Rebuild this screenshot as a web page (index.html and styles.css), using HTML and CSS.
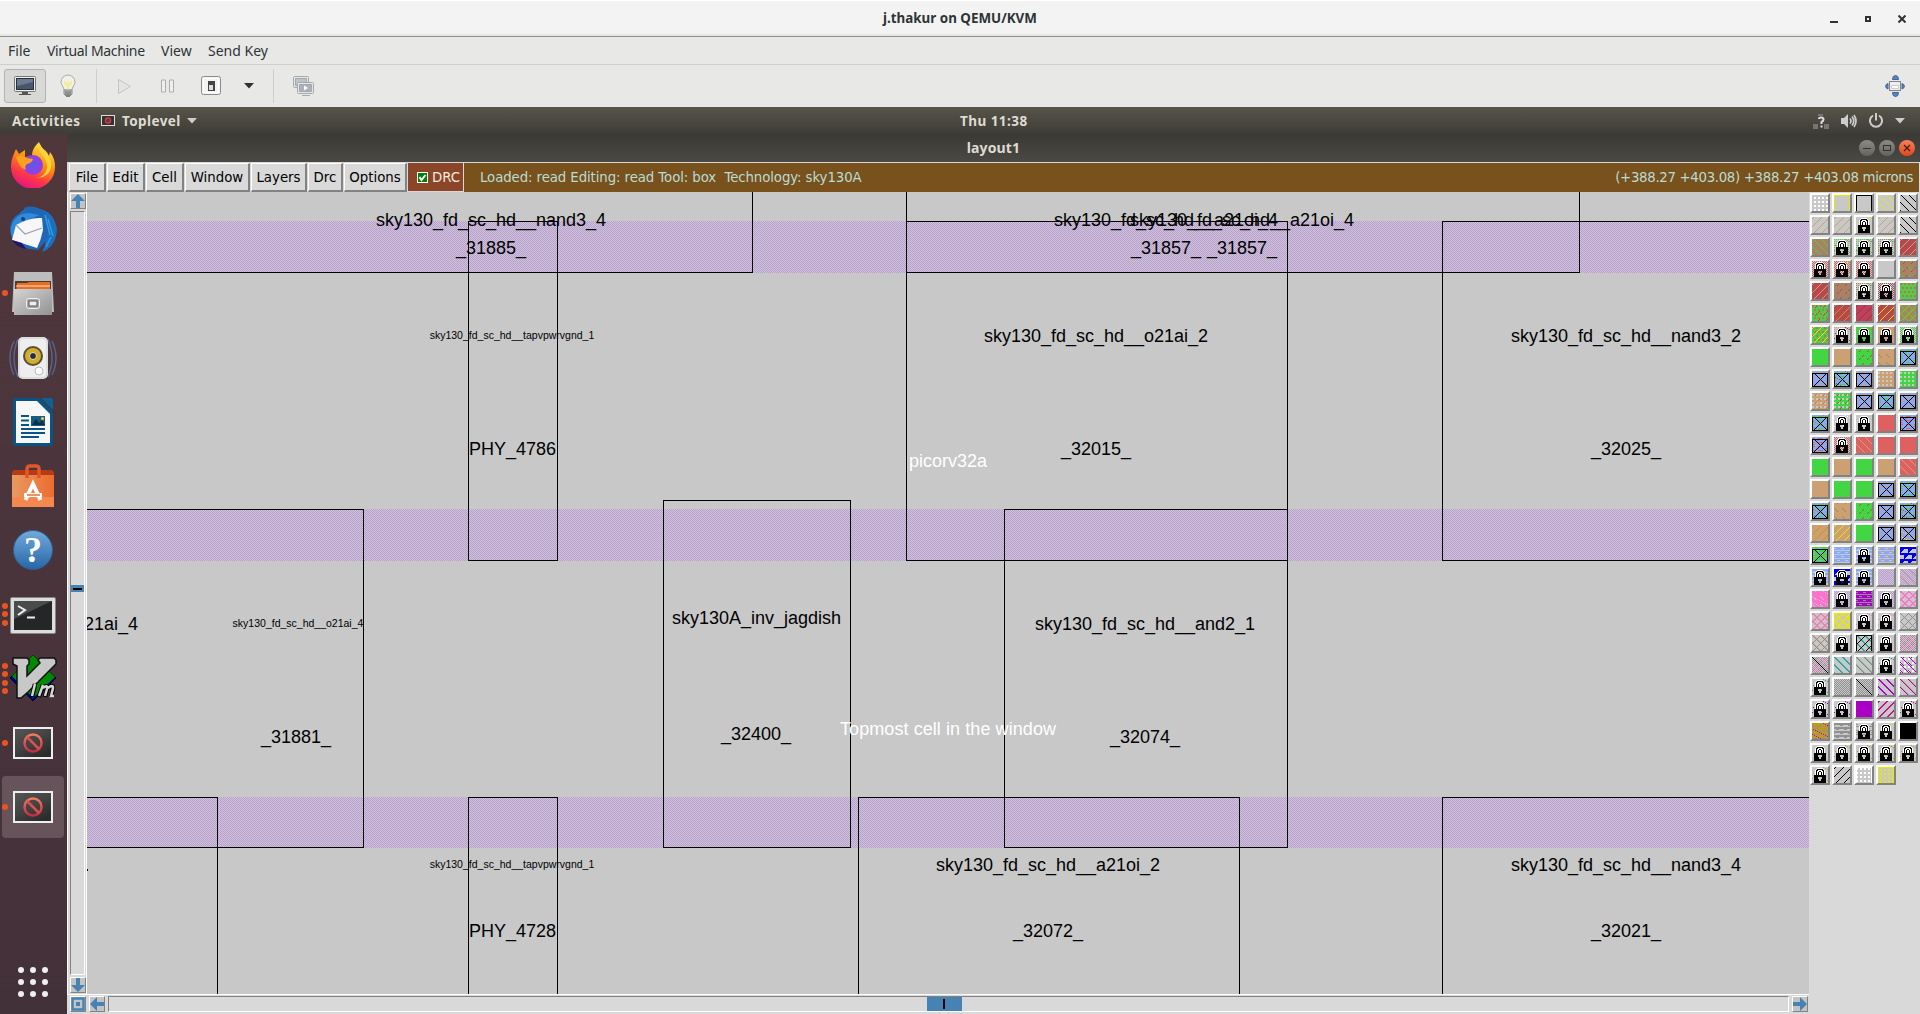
FILE: index.html
```html
<!DOCTYPE html>
<html lang="en">
<head>
<meta charset="utf-8">
<title>j.thakur on QEMU/KVM</title>
<link rel="stylesheet" href="styles.css">
</head>
<body>
<header class="host-title">
  <span class="host-title-text">j.thakur on QEMU/KVM</span>
  <div class="host-controls">
    <svg width="8" height="8"><path d="M0 7h8" stroke="#2e3436" stroke-width="2"/></svg>
    <svg width="6" height="6"><rect x="1" y="1" width="4" height="4" fill="none" stroke="#2e3436" stroke-width="2"/></svg>
    <svg width="8" height="8"><path d="M.5.5l7 7M7.500.5l-7 7" stroke="#2e3436" stroke-width="2"/></svg>
  </div>
</header>
<nav class="host-menu"><span class="m1">File</span><span class="m2">Virtual Machine</span><span class="m3">View</span><span class="m4">Send Key</span></nav>
<div class="host-tools">
  <button class="tool tool-active"><svg width="24" height="22" viewBox="0 0 24 22"><rect x="1.500" y="1.500" width="21" height="15" rx="1" fill="#eee" stroke="#777"/><rect x="3.500" y="3.500" width="17" height="11" fill="#47566b" stroke="#28313e"/><path d="M4 4h16v3L4 11z" fill="#6c7b8f"/><path d="M9 17h6v2h3v1H6v-1h3z" fill="#555"/></svg></button>
  <span class="tool t-bulb"><svg width="18" height="24" viewBox="0 0 18 24"><path d="M9 1a7 7 0 0 1 7 7c0 3-3 5-3 8H5c0-3-3-5-3-8a7 7 0 0 1 7-7z" fill="#f1f1ea" stroke="#aaa"/><path d="M5 6l3 3 1-3 1 3 3-3v4l-3 3v3H8v-3l-3-3z" fill="#f4ed9b"/><path d="M5 16h8v4l-2 2H7l-2-2z" fill="#ccc" stroke="#888"/><path d="M6 18h6M6 20h6M7 22h4" stroke="#555"/></svg></span>
  <i class="tool-sep"></i>
  <span class="tool t-play"><svg width="15" height="17"><path d="M1.500 1.500v14l12-7z" fill="#e4e4e2" stroke="#c4c4c2"/></svg></span>
  <span class="tool t-pause"><svg width="14" height="14"><path d="M.5 1v12h4V1zM8.500 1v12h4V1z" fill="#efefed" stroke="#aeaeac"/></svg></span>
  <span class="tool t-power"><svg width="22" height="22"><rect x="1.500" y="1.500" width="19" height="18" rx="2" fill="#f3f3f3" stroke="#8c8c8c"/><rect x="3.500" y="3.500" width="15" height="14" fill="none" stroke="#fff"/><rect x="8" y="6" width="7" height="10" fill="#444"/><rect x="9" y="10" width="4" height="5" fill="#ddd"/></svg></span>
  <span class="tool t-drop"><svg width="10" height="6"><path d="M0 0h10L5 5.500z" fill="#2e3436"/></svg></span>
  <i class="tool-sep"></i>
  <span class="tool t-snap"><svg width="23" height="22"><g fill="#e4e5e6" stroke="#a6a9ac"><rect x="1.500" y="1.500" width="15" height="11" rx="1"/><path d="M3.500 3.500h11v7h-11z" fill="#bcc2ca"/><rect x="5.500" y="7.500" width="16" height="11" rx="1"/><path d="M7.500 9.500h12v7h-12z" fill="#a9b1bd"/></g><path d="M12 10.500v5l4-2.500z" fill="#fff"/><path d="M10 20.500h8" stroke="#aaa"/></svg></span>
  <span class="t-full"><svg width="22" height="22"><g fill="#5c85bd" stroke="#3d659e"><path d="M8.500 4.500a3 4 0 0 1 6 0zM8.500 17.500a3 4 0 0 0 6 0zM4 8.500a4 3 0 0 0 0 5.500zM18 8.500a4 3 0 0 1 0 5.500z"/></g><rect x="5.500" y="6.500" width="11" height="9" fill="#eee" stroke="#85867f"/><path d="M7.500 10.500h7v3h-7z" fill="#fff" stroke="#ccc"/></svg></span>
</div>
<div class="gnome-bar">
  <span class="activities">Activities</span>
  <svg class="app-ico" width="14" height="11"><rect x=".5" y=".5" width="13" height="10" fill="#333" stroke="#ddd"/><circle cx="7" cy="5.500" r="2.500" fill="none" stroke="#d33c46" stroke-width="1.500"/><path d="M5.500 4l3 3" stroke="#d33c46"/></svg>
  <span class="app-name">Toplevel</span>
  <svg class="app-drop" width="10" height="6"><path d="M0 0h10L5 5.500z" fill="#ccc"/></svg>
  <span class="clock">Thu 11:38</span>
  <div class="tray">
    <svg width="16" height="16"><path d="M5 1h5v2H5zM0 11h5v5H0zM11 11h5v5h-5z" fill="#77756f"/><path d="M6 6q0-1.500 2-1.500 2.500 0 2.500 2Q10.500 8 8.500 9v2M8.500 12.500v2" fill="none" stroke="#ddd" stroke-width="2"/></svg>
    <svg width="16" height="14"><path d="M0 4h3l4-4v14l-4-4H0z" fill="#ccc"/><path d="M9 4.500q2 2.500 0 5M11 2.500q3.500 4.500 0 9M13 1q4 6 0 12" fill="none" stroke="#ccc" stroke-width="1.700"/></svg>
    <svg width="14" height="15"><path d="M4 2.500a6 6 0 1 0 6 0M7 0v7.500" fill="none" stroke="#ccc" stroke-width="2"/></svg>
    <svg width="10" height="6"><path d="M0 0h10L5 5.500z" fill="#ccc"/></svg>
  </div>
</div>
<div class="desktop">
  <aside class="dock">
    <div class="app"><svg width="46" height="46" viewBox="0 0 46 46"><defs><linearGradient id="fx" x1=".8" y1="0" x2=".35" y2="1"><stop offset="0" stop-color="#fff44f"/><stop offset=".4" stop-color="#ff980e"/><stop offset=".75" stop-color="#ff3647"/><stop offset="1" stop-color="#e31587"/></linearGradient><radialGradient id="fg"><stop offset="0" stop-color="#5b5ae8"/><stop offset="1" stop-color="#9a3be0"/></radialGradient></defs><path d="M3 14L6 7l3 5 6-4v7l7-1c0-7 4-11 7-14 2 7 8 8 10 14l1-4c4 5 5 10 5 15a22 22 0 0 1-44 0c0-5 1-8 2-11z" fill="url(#fx)"/><circle cx="23" cy="23" r="10" fill="url(#fg)"/><path d="M6 15q5-3 10 1l7 1q-1 4-6 5-3 2-1 6-7-2-10-13z" fill="#ffa01f"/><path d="M30 2c-5 9 8 11 7 24-1 6-6 10-11 10 13 0 19-11 13-21-2-5-7-6-9-13z" fill="#ffd43b"/></svg></div>
    <div class="app"><svg width="48" height="48" viewBox="0 0 48 48"><path d="M9 10Q19-2 31 4q14 3 17 20-1 18-15 23 6-10 2-20L12 14z" fill="#1d6fbe"/><path d="M1 26Q1 8 18 7l-3-4q8-4 19 3 9 8 3 30l-8 9Q5 44 1 26z" fill="#1f66b4"/><path d="M2 22Q6 8 20 8l10 2-18 9-8 16q-3-6-2-13z" fill="#2f8bd9"/><path d="M7 20q14-8 26-7l1 12q-2 10-6 18L3 35z" fill="#f7f7f9"/><path d="M7 20l9 9 17-6" fill="none" stroke="#9aa0ac" stroke-width="1.200"/><path d="M3 35l10 3 4 6Q7 42 3 35z" fill="#241569"/><path d="M39 14l5 17M36 10l5 20M42 32l-5 10" stroke="#2f9ae0" stroke-width="1.500"/><circle cx="14" cy="14" r="2" fill="#1a3f6e"/></svg></div>
    <div class="app"><i class="dots"><b></b></i><svg class="files" width="42" height="44" viewBox="0 0 42 44"><defs><linearGradient id="cb" x2="1" y2="1"><stop stop-color="#d4d4d4"/><stop offset="1" stop-color="#929292"/></linearGradient></defs><path d="M2 0h38l2 40H0z" fill="#bdbdbd"/><path d="M3 9h36v9H3z" fill="#493c34"/><path d="M5 11h10l2-1h21v10H4z" fill="#e46d28"/><path d="M4 14h34" stroke="#ffe1bd"/><path d="M2 17h38v26H2z" fill="url(#cb)"/><rect x="14.500" y="26.500" width="13" height="10" rx="2" fill="#aaa" stroke="#eee"/><rect x="17" y="29" width="8" height="5" fill="#eee" stroke="#555"/></svg></div>
    <div class="app"><svg width="48" height="44" viewBox="0 0 48 44"><path d="M5 5q-8 17 0 34M9 3q-8 19 0 38M43 5q8 17 0 34M39 3q8 19 0 38" fill="none" stroke="#566387" stroke-width="1.500"/><rect x="9" y="1" width="30" height="42" rx="5" fill="#eee"/><rect x="10" y="2" width="28" height="40" rx="5" fill="none" stroke="#ccc"/><circle cx="24" cy="20" r="10" fill="#554e3a"/><circle cx="24" cy="20" r="8" fill="#d3ad25"/><circle cx="24" cy="20" r="3.500" fill="#2d302e" stroke="#ddd"/><circle cx="30" cy="35" r="4" fill="#fff" stroke="#bbb"/></svg></div>
    <div class="app"><svg width="40" height="48" viewBox="0 0 40 48"><path d="M2 0h24l14 14v32q0 2-2 2H2q-2 0-2-2V2q0-2 2-2z" fill="#075485"/><path d="M28 0h10q2 0 2 2v10z" fill="#0b6199"/><path d="M3 3h21l13 13v29H3z" fill="#f7f7f7"/><path d="M8 18h8M8 22.500h8M8 27h8M8 31h24M8 35h24M8 39h18" stroke="#0a5585" stroke-width="2"/><path d="M18 18h14v10H18z" fill="#155d87"/><path d="M19 27l4-6 3 4 3-3 3 5z" fill="#10333f"/><circle cx="29.500" cy="20.500" r="1.500" fill="#f4cc47"/></svg></div>
    <div class="app"><svg width="42" height="44" viewBox="0 0 42 44"><defs><linearGradient id="sw" x2="1"><stop stop-color="#e99a61"/><stop offset="1" stop-color="#ed6b2e"/></linearGradient></defs><path d="M0 8l2-2h38l2 2v4H0z" fill="#b33c16"/><path d="M0 11h42v31q0 1-1 1H1q-1 0-1-1z" fill="url(#sw)"/><path d="M0 33h42v10H0z" fill="#f5884e"/><path d="M15 14V5q0-3 3-3h6q3 0 3 3v9" fill="none" stroke="#e2562a" stroke-width="3.500"/><path d="M13.500 36L21 20l7.500 16M12 31h18" fill="none" stroke="#fff" stroke-width="4"/><path d="M15 31h13" stroke="#ed6c31" stroke-width="1.500"/></svg></div>
    <div class="app"><svg width="40" height="40" viewBox="0 0 40 40"><defs><linearGradient id="hp" y2="1" x2="0"><stop stop-color="#72a9dc"/><stop offset="1" stop-color="#2767a6"/></linearGradient></defs><circle cx="20" cy="20" r="19.500" fill="url(#hp)" stroke="#2a6195"/></svg><span class="help-mark">?</span></div>
    <div class="app"><i class="dots"><b></b><b></b><b></b></i><svg class="term" width="46" height="38" viewBox="0 0 46 38"><rect width="46" height="37" rx="2" fill="#888"/><rect x="1" y="1" width="44" height="35" rx="1" fill="#ddd"/><rect x="4" y="4" width="38" height="29" fill="#252627"/><path d="M4 4h38L4 22z" fill="#4a4b4b"/><path d="M8 9l7 4-7 5M17 20.500h8" fill="none" stroke="#eee" stroke-width="2"/></svg></div>
    <div class="app"><i class="dots"><b></b><b></b><b></b><b></b></i><svg class="vim" width="48" height="48" viewBox="0 0 48 48"><path d="M24 1l23 23-23 23L1 24z" fill="#00009c" stroke="#000"/><path d="M24 1l22 22-22 21L3 22z" fill="#080"/><path d="M5 4h14l2 2v4l-2 2v10L32 9l-2-3 2-2h14l2 2v4L20 38l-7 6H9V12l-4-2z" transform="translate(-1 0)" fill="#c8c8c8" stroke="#111" stroke-width="1.500"/><g fill="none" stroke="#000" stroke-width="4.500"><path d="M26 30l-3 13M30 43l4-12M34 34q5-4 4 1l-2 8M39 34q5-4 5 0l-2 9"/></g><g fill="none" stroke="#d5d5d5" stroke-width="2.500"><path d="M27 26v2M26 30l-3 12M30 42l4-11M34 34q5-4 4 1l-2 7M39 34q5-4 5 0l-2 8h3"/></g></svg></div>
    <div class="app"><i class="dots"><b></b></i><svg width="40" height="32" viewBox="0 0 40 32"><defs><linearGradient id="np" x2=".7" y2="1"><stop stop-color="#555"/><stop offset=".5" stop-color="#444"/><stop offset="1" stop-color="#2c2c2c"/></linearGradient><linearGradient id="nr" y2="1" x2="0"><stop stop-color="#f07c5e"/><stop offset="1" stop-color="#c22c45"/></linearGradient></defs><path d="M0 0h40v32H0z" fill="#eee"/><path d="M2 2h36v28H2z" fill="url(#np)"/><circle cx="20" cy="16" r="8.500" fill="none" stroke="url(#nr)" stroke-width="2.500"/><path d="M14 10l12 12" stroke="#df4f4d" stroke-width="2.500"/></svg></div>
    <div class="app app-current"><i class="dots"><b></b></i><svg width="40" height="32" viewBox="0 0 40 32"><path d="M0 0h40v32H0z" fill="#eee"/><path d="M2 2h36v28H2z" fill="url(#np)"/><circle cx="20" cy="16" r="8.500" fill="none" stroke="url(#nr)" stroke-width="2.500"/><path d="M14 10l12 12" stroke="#df4f4d" stroke-width="2.500"/></svg></div>
    <div class="apps-grid"><b></b><b></b><b></b><b></b><b></b><b></b><b></b><b></b><b></b></div>
  </aside>
  <main class="window">
    <div class="win-title"><span>layout1</span>
      <div class="win-controls"><i class="wc"><svg width="16" height="16"><path d="M4 8.500h8" stroke="#33322e"/></svg></i><i class="wc"><svg width="16" height="16"><rect x="4.500" y="5.500" width="7" height="5" fill="none" stroke="#33322e"/></svg></i><i class="wc wc-close"><svg width="16" height="16"><path d="M5 5l6 6M11 5l-6 6" stroke="#4b1c0c" stroke-width="1.300"/></svg></i></div>
    </div>
    <div class="menubar">
      <button class="mb b-file">File</button><button class="mb b-edit">Edit</button><button class="mb b-cell">Cell</button><button class="mb b-window">Window</button><button class="mb b-layers">Layers</button><button class="mb b-drc">Drc</button><button class="mb b-options">Options</button>
      <span class="drc"><svg width="11" height="11"><rect x=".5" y=".5" width="10" height="10" fill="#008000" stroke="#fff"/><path d="M2.500 5l2 3 4-5" fill="none" stroke="#fff" stroke-width="2"/></svg>DRC</span>
      <div class="status"><span class="st-left">Loaded: read Editing: read Tool: box&nbsp; Technology: sky130A</span><span class="st-right">(+388.27 +403.08) +388.27 +403.08 microns</span></div>
    </div>
    <div class="work">
      <div class="vscroll">
        <span class="arrow"><svg width="14" height="14"><path d="M7 0l7 7H9v7H5V7H0z" fill="#4682b4"/></svg></span>
        <div class="vtrough"><i class="vthumb"></i></div>
        <span class="arrow"><svg width="14" height="14"><path d="M7 14l7-7H9V0H5v7H0z" fill="#4682b4"/></svg></span>
      </div>
      <svg class="layout" width="1722" height="802" viewBox="87 192 1722 802">
        <defs><pattern id="dither" width="2" height="2" patternUnits="userSpaceOnUse"><path d="M0 0h1v1H0zM1 1h1v1H1z" fill="#bf9ade"/></pattern></defs>
        <g fill="url(#dither)" shape-rendering="crispEdges"><path d="M87 221h1722v52H87zM87 509h1722v52H87zM87 797h1722v51H87z"/></g>
        <g class="cells">
          <path d="M80 272.500H752.500V190M468.500 221.500h89v339h-89zM906.500 190v82.500h673V190M906.500 221.500h381v339h-381zM1815 221.500H1442.500v339H1815"/>
          <path d="M80 509.500H363.500v338H80M663.500 500.500h187v347h-187zM1004.500 509.500h283v338h-283z"/>
          <path d="M80 797.500H217.500V1000M468.500 1000V797.500h89V1000M858.500 1000V797.500h381V1000M1442.500 1000V797.500H1815"/>
        </g>
        <g class="names">
          <text x="491" y="226">sky130_fd_sc_hd__nand3_4</text><text x="491" y="254">_31885_</text>
          <text x="1166" y="226">sky130_fd_sc_hd__a21oi_4</text><text x="1242" y="226">sky130_fd_sc_hd__a21oi_4</text>
          <text x="1166" y="254">_31857_</text><text x="1242" y="254">_31857_</text>
          <text class="tiny" x="512" y="339">sky130_fd_sc_hd__tapvpwrvgnd_1</text><text x="512.500" y="455">PHY_4786</text>
          <text x="1096" y="342">sky130_fd_sc_hd__o21ai_2</text><text x="1096" y="455">_32015_</text>
          <text x="1626" y="342">sky130_fd_sc_hd__nand3_2</text><text x="1626" y="455">_32025_</text>
          <text x="111" y="630">21ai_4</text><text class="tiny" x="298" y="627">sky130_fd_sc_hd__o21ai_4</text><text x="296" y="743">_31881_</text>
          <text x="756.500" y="624">sky130A_inv_jagdish</text><text x="756" y="740">_32400_</text>
          <text x="1145" y="630">sky130_fd_sc_hd__and2_1</text><text x="1145" y="743">_32074_</text>
          <text class="tiny" x="512" y="868">sky130_fd_sc_hd__tapvpwrvgnd_1</text><text x="512.500" y="937">PHY_4728</text>
          <text x="1048" y="871">sky130_fd_sc_hd__a21oi_2</text><text x="1048" y="937">_32072_</text>
          <text x="1626" y="871">sky130_fd_sc_hd__nand3_4</text><text x="1626" y="937">_32021_</text>
          <path d="M87 869h1v2h-1z"/>
          <g fill="#fff"><text x="948" y="467">picorv32a</text><text x="948" y="735" textLength="216">Topmost cell in the window</text></g>
        </g>
      </svg>
      <div class="palette" id="palette"></div>
      <div class="hscroll">
        <span class="arrow"><svg width="14" height="14"><path d="M1.500 1.500h11v11h-11z" fill="none" stroke="#4682b4" stroke-width="2.500"/><path d="M5 5h4v4H5z" fill="#4682b4"/></svg></span>
        <span class="arrow"><svg width="14" height="14"><path d="M0 7l7-7v5h7v4H7v5z" fill="#4682b4"/></svg></span>
        <div class="htrough"><i class="hthumb"></i></div>
        <span class="arrow"><svg width="14" height="14"><path d="M14 7L7 0v5H0v4h7v5z" fill="#4682b4"/></svg></span>
      </div>
    </div>
  </main>
</div>
<script src="palette.js"></script>
</body>
</html>
```
FILE: styles.css
```css
* { box-sizing: border-box; }
body { margin: 0; width: 1920px; height: 1014px; overflow: hidden; font-family: "Noto Sans", "Open Sans", sans-serif; display: flex; flex-direction: column; background: #e8e8e6; }
svg { display: block; flex: none; }
button { font: inherit; padding: 0; margin: 0; }

.host-title { height: 37px; flex: none; background: #f3f3f3; border-top: 1px solid #fff; border-bottom: 1px solid #8f918b; display: grid; grid-template-columns: 1fr auto 1fr; align-items: center; box-shadow: inset 0 -2px #e6e6e3; }
.host-title-text { grid-column: 2; font-weight: 700; font-size: 13.400px; color: #2e3436; padding-bottom: 2px; }
.host-controls { justify-self: end; display: flex; gap: 27px; padding-right: 14px; align-items: center; }
.host-menu { height: 28px; flex: none; border-bottom: 1px solid #cfcfcd; display: flex; align-items: center; font-size: 14px; color: #2e3436; padding-left: 8px; }
.host-menu .m1 { width: 39px; }
.host-menu .m2 { width: 114px; letter-spacing: -.33px; }
.host-menu .m3 { width: 47px; }
.host-tools { height: 42px; flex: none; display: flex; align-items: center; padding-left: 4px; }
.tool { display: flex; align-items: center; justify-content: center; height: 34px; width: 42px; }
.tool-active { background: #d8d8d6; border: 1px solid #b3b3b1; border-radius: 3px; }
.t-bulb { width: 43px; }
.tool-sep { width: 1px; height: 34px; background: #cfcfcd; margin: 0 7px; }
.t-play { width: 41px; }
.t-pause { width: 45px; }
.t-power { width: 41px; }
.t-drop { width: 35px; }
.t-snap { width: 44px; }
.t-full { margin-left: auto; padding-right: 14px; }

.gnome-bar { height: 27px; flex: none; background: linear-gradient(#57544a, #3e3c37); display: flex; align-items: center; color: #dedbd2; font-weight: 700; font-size: 13.500px; position: relative; padding-left: 12px; }
.activities { width: 89px; letter-spacing: .6px; }
.app-name { margin: 0 6px 0 7px; letter-spacing: .4px; }
.clock { position: absolute; left: 960px; letter-spacing: .45px; }
.tray { margin-left: auto; display: flex; align-items: center; gap: 12px; padding-right: 15px; }

.desktop { flex: 1; display: flex; min-height: 0; }
.dock { width: 67px; flex: none; background: linear-gradient(#50373c, #43313a); display: flex; flex-direction: column; gap: 2.200px; }
.app { height: 62px; width: 62px; margin-left: 2px; flex: none; display: flex; align-items: center; justify-content: center; position: relative; border-radius: 4px; }
.app-current { background: #66545a; }
.files { margin-top: 2px; }
.term { margin-top: 4px; }
.vim { margin-bottom: 2px; }
.dots { position: absolute; left: 0; top: 0; height: 100%; display: flex; flex-direction: column; justify-content: center; gap: 2.500px; }
.dots b { width: 6px; height: 6px; border-radius: 50%; background: #e95420; }
.help-mark { position: absolute; inset: 0; text-align: center; font: 700 36px/62px "Liberation Serif", serif; color: #fff; }
.apps-grid { margin: auto auto 17px 18px; display: grid; grid-template-columns: repeat(3, 6px); gap: 6px; }
.apps-grid b { width: 6px; height: 6px; border-radius: 50%; background: #f0eeee; }

.window { flex: 1; min-width: 0; display: flex; flex-direction: column; background: #d9d9d9; }
.win-title { height: 28px; flex: none; background: linear-gradient(#3a3935, #4b4944); color: #dedbd2; font-weight: 700; font-size: 14px; display: grid; grid-template-columns: 1fr auto 1fr; align-items: center; }
.win-title span { grid-column: 2; padding-bottom: 2px; letter-spacing: .15px; }
.win-controls { justify-self: end; display: flex; gap: 4px; padding-right: 5px; }
.wc { width: 16px; height: 16px; border-radius: 50%; background: linear-gradient(#8d8b84, #65635d); }
.wc-close { background: linear-gradient(#f4825c, #e2481c); }
.menubar { height: 30px; flex: none; display: flex; padding: 1px 1px 0 2px; font: 13.333px "DejaVu Sans", sans-serif; color: #000; }
.mb { height: 29px; border: 0; border-left: 1px solid #fff; border-top: 1px solid #fff; border-right: 2px solid #828282; border-bottom: 2px solid #828282; background: #d9d9d9; margin-right: 1px; flex: none; color: #000; white-space: nowrap; }
.b-file { width: 37px; }
.b-edit, .b-cell { width: 38px; }
.b-window { width: 65px; }
.b-layers { width: 56px; }
.b-drc { width: 35px; }
.b-options { width: 63px; }
.drc { width: 56px; background: #8b4528; color: #f4e9dc; display: flex; align-items: center; gap: 4px; padding-left: 9px; border: 1px solid #d9d9d9; border-width: 0 1px 1px 0; }
.status { flex: 1; background: #79511c; color: #b8dcd6; display: flex; align-items: center; justify-content: space-between; padding: 0 6px 0 16px; white-space: nowrap; }
.st-left { letter-spacing: -.1px; }
.st-right { letter-spacing: -.33px; }
.work { flex: 1; display: grid; grid-template-columns: 20px 1722px 111px; grid-template-rows: 802px 20px; }
.vscroll { display: flex; flex-direction: column; background: #d9d9d9; padding: 1px 0 1px 2px; border-left: 1px solid #fff; gap: 2px; border-right: 1px solid #fff; }
.arrow { width: 16px; height: 16px; flex: none; border: 1px solid #fff; border-right-color: #828282; border-bottom-color: #828282; background: #c3c3c3; display: flex; align-items: center; justify-content: center; }
.vtrough { flex: 1; width: 15px; border: 1px solid #fff; border-left-color: #828282; border-top-color: #828282; padding-top: 373px; }
.vthumb { display: block; height: 7px; border: solid #4682b4; border-width: 3px 2px 2px; background: #000; }
.layout { background: #c8c8c8; }
.cells { fill: none; stroke: #000; shape-rendering: crispEdges; }
.names { font: 18px "Liberation Sans", Arial, sans-serif; text-anchor: middle; fill: #000; }
.names .tiny { font-size: 10.500px; }
.palette { grid-column: 3; grid-row: 1 / 3; display: grid; grid-template-columns: repeat(5, 20px); grid-auto-rows: 20px; gap: 2px; align-content: start; padding: 1px; background: #d9d9d9; }
.swatch { border: 2px solid #fff; border-right-color: #828282; border-bottom-color: #828282; background: #c8c8c8; }
.hscroll { grid-column: 1 / 3; display: flex; gap: 3px; padding: 1px 1px 0 3px; border-top: 1px solid #fff; }
.htrough { flex: 1; height: 16px; border: 1px solid #fff; border-top-color: #828282; border-left-color: #828282; display: flex; padding-left: 818px; }
.hthumb { width: 35px; border: solid #4682b4; border-width: 2px 17px 2px 16px; background: #000; }
```
FILE: palette.js
```js
// Layer palette: each entry is "base-colour overlay:colour ...", drawn on a 16x16 pixel grid.
const C = { g: '#42d742', t: '#cba072', n: '#a98266', r: '#b84850', e: '#de6060', s: '#c8c8c8', k: '#000', w: '#fff', y: '#e8e800', o: '#c89a10', b: '#86a9fb', d: '#0000f0', p: '#bf9ade', i: '#ff72cd', u: '#a800c8', m: '#c8108c', c: '#28a8a0', a: '#909090' };
const LOCK = [
  '............', '...WWWWWW...', '..WKKKKKKW..', '.WKKWWWWKKW.', '.WKWWKKWWKW.', '.WKWKWWKWKW.', '.WKWKWWKWKW.', '.WKWKWWKWKW.',
  'KKKKKKKKKKKK', 'KKKKKKKKKKKK', 'KKKK....KKKK', 'KKKK....KKKK', 'KKKKK..KKKKK', 'KKKKK..KKKKK', 'KKKKKKKKKKKK', 'KKKKKKKKKKKK'
];
const mod = (v, m) => ((v % m) + m) % m;
const P = {
  grid: (x, y) => x > 1 && mod(x - 2, 4) < 2 && y > 1 && mod(y - 2, 4) < 2,
  box: (x, y) => y === 0 || x === 0 || x === 15,
  back: (x, y) => mod(x - y, 8) === 1,
  back2: (x, y) => mod(x - y, 8) < 2,
  diag: (x, y) => mod(x + y, 8) === 1,
  diag2: (x, y) => mod(x + y, 8) < 2,
  dash: (x, y) => mod(x + y, 8) === 5 && mod(x, 8) > 2 && mod(y, 8) > 0,
  dashb: (x, y) => mod(x - y, 8) === 3 && mod(x, 8) < 4,
  cross: (x, y) => mod(x + y, 8) < 2 || mod(x - y, 8) < 2,
  cross1: (x, y) => mod(x + y, 8) === 0 || mod(x - y, 8) === 0,
  check: (x, y) => (x + y) % 2 === 0,
  check2: (x, y) => x % 2 === 0 && y % 2 === 0,
  dots: (x, y) => mod(x + 2 * (y >> 2 & 1), 4) < 2 && y % 4 < 2,
  holes: (x, y) => mod(x, 4) < 2 && (y % 4 === 1 || y % 4 === 2),
  lines: (x, y) => y % 4 === 3 || (y % 4 === 1 && mod(x + y, 8) < 3),
  bars: (x, y) => y % 4 < 2 || (y % 4 === 2 && mod(x + y, 8) < 3),
  flecks: (x, y) => (y % 4 === 1 && mod(x + 2 * y, 8) < 5) || (y % 4 === 3 && mod(x + y, 8) < 2),
  waves: (x, y) => mod(y, 6) < 2 || mod(x + (mod(y, 12) < 6 ? 0 : 4), 8) < 6 - mod(y, 6),
  specks: (x, y) => mod(x * 3 + y * 5, 11) === 0 && (x + y) % 3 > 0,
  one: (x, y) => x === y,
  X: (x, y) => y === 2 || (y > 1 && (x === 0 || x === 15)) || y === 15 || (y > 1 && (x === y || x + y === 16))
};
const rows = `
s grid:w|s box:y|s box:k|s back:y|s back:k
s diag:t|s diag:t|s specks:y lock|s diag:t|s back:k
n back:g|s check2:g specks:n lock|s check2:g specks:n lock|s check2:n specks:g lock|r diag:t
s check:e lock|s check:e specks:y lock|s check:e lock|s|n dashb:g dash:r
r diag:t|n dash:r|s check2:n specks:g lock|s check:r lock|g dots:e
g dots:e dash:r|r diag:o|r diag:m|r diag:y|n cross1:g diag:o
g dots:e diag:y|s check2:t specks:m lock|g specks:e lock|t specks:i lock|s check:g lock
g|t|g dash:r|t dashb:n|b flecks:g X:k
b flecks:t X:k|b flecks:g specks:r X:k|b flecks:t X:k|t holes:s|g holes:s
t holes:s dash:n|g holes:s dash:r|b flecks:t X:k|b flecks:g X:k|b flecks:t X:k
b flecks:g specks:e X:k|s specks:w lock|s lock|e|b flecks:e X:k
b flecks:e specks:t X:k|s check:e lock|e back:t|e|e
g|t|g|t|e back:t
t|g|g|b flecks:t X:k|b flecks:g X:k
b flecks:g specks:e X:k|t dashb:n|g dash:r|b flecks:t X:k|b flecks:g specks:r X:k
t diag:o|t diag:y|g|b flecks:t X:k|b flecks:t specks:y X:k
g flecks:b X:k|b lines:s|s bars:b lock|b lines:s back:t|s waves:d
s bars:b lock|s waves:d lock|s bars:b lock|s check:p|s check:p back:t
i specks:s dashb:s|s check:p lock|u lines:a|s check:p lock|s cross:i
s cross:i back:t|s cross:y box:y|s specks:i lock|s specks:i lock|s cross1:a
s cross1:a back:t|s lock|s back2:c diag:k box:k|s lock|s check:a cross1:i
s check:a cross1:i one:k|s back2:c|s back2:c back:t|s specks:c lock|s holes:w dashb:u back:u
s specks:c lock|s check:a|s check:a one:k|s back2:u|s back2:u back:t
s specks:u lock|s specks:u lock|u specks:m|s diag2:m|s specks:m lock
o lines:a specks:m|s bars:a|s lines:a lock|s specks:y lock|k
s lock|s specks:o lock|s specks:o lock|s specks:o lock|s specks:o lock
s specks:o lock|s diag:k|s holes:w box:w|s grid:y box:y`.trim().split('\n');

function pixel(layers, x, y) {
  let color = C[layers[0]];
  for (const layer of layers.slice(1)) {
    const [name, key] = layer.split(':');
    if (name === 'lock') {
      const ch = x > 1 && x < 14 ? LOCK[y][x - 2] : '.';
      if (ch === 'K') color = '#000';
      if (ch === 'W') color = '#fff';
    } else if (P[name](x, y)) color = C[key];
  }
  return color;
}
document.getElementById('palette').innerHTML = rows.flatMap(r => r.split('|')).map(spec => {
  const layers = spec.trim().split(' ');
  const paths = {};
  for (let y = 0; y < 16; y++) for (let x = 0; x < 16; x++) {
    const c = pixel(layers, x, y);
    paths[c] = (paths[c] || '') + `M${x} ${y}h1v1h-1z`;
  }
  const body = Object.entries(paths).map(([c, d]) => `<path fill="${c}" d="${d}"/>`).join('');
  return `<div class="swatch"><svg width="16" height="16" shape-rendering="crispEdges">${body}</svg></div>`;
}).join('');
```
